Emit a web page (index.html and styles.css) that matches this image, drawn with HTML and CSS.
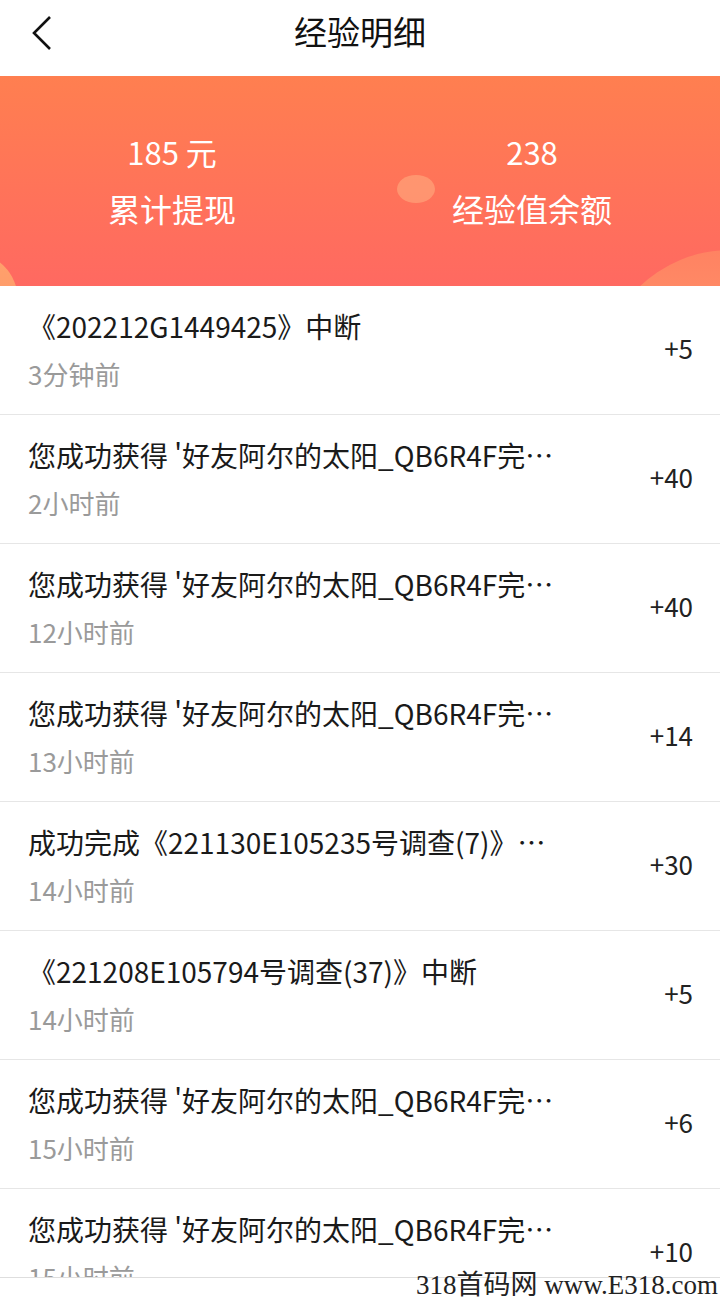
FILE: index.html
```html
<!DOCTYPE html>
<html lang="zh-CN">
<head>
  <meta charset="UTF-8">
  <meta name="viewport" content="width=device-width, initial-scale=1.0">
  <title>经验明细</title>
  <link rel="stylesheet" href="styles.css">
</head>
<body>
<div class="page">
  <header class="topbar">
    <a class="back" href="#">
      <svg width="24" height="40" viewBox="0 0 24 40">
        <polyline points="19,7 3,23 19,39" fill="none" stroke="#111" stroke-width="2.6"/>
      </svg>
    </a>
    <h1>经验明细</h1>
  </header>

  <section class="banner">
    <span class="dot"></span>
    <span class="bubble-left"></span>
    <span class="bubble-right"></span>
    <div class="stat">
      <div class="num">185 元</div>
      <div class="label">累计提现</div>
    </div>
    <div class="stat">
      <div class="num">238</div>
      <div class="label">经验值余额</div>
    </div>
  </section>

  <ul class="list">
    <li class="row">
      <div class="info">
        <div class="title">《202212G1449425》中断</div>
        <div class="time">3分钟前</div>
      </div>
      <div class="amount">+5</div>
    </li>
    <li class="row">
      <div class="info">
        <div class="title">您成功获得 '好友阿尔的太阳_QB6R4F完…</div>
        <div class="time">2小时前</div>
      </div>
      <div class="amount">+40</div>
    </li>
    <li class="row">
      <div class="info">
        <div class="title">您成功获得 '好友阿尔的太阳_QB6R4F完…</div>
        <div class="time">12小时前</div>
      </div>
      <div class="amount">+40</div>
    </li>
    <li class="row">
      <div class="info">
        <div class="title">您成功获得 '好友阿尔的太阳_QB6R4F完…</div>
        <div class="time">13小时前</div>
      </div>
      <div class="amount">+14</div>
    </li>
    <li class="row">
      <div class="info">
        <div class="title">成功完成《221130E105235号调查(7)》…</div>
        <div class="time">14小时前</div>
      </div>
      <div class="amount">+30</div>
    </li>
    <li class="row">
      <div class="info">
        <div class="title">《221208E105794号调查(37)》中断</div>
        <div class="time">14小时前</div>
      </div>
      <div class="amount">+5</div>
    </li>
    <li class="row">
      <div class="info">
        <div class="title">您成功获得 '好友阿尔的太阳_QB6R4F完…</div>
        <div class="time">15小时前</div>
      </div>
      <div class="amount">+6</div>
    </li>
    <li class="row">
      <div class="info">
        <div class="title">您成功获得 '好友阿尔的太阳_QB6R4F完…</div>
        <div class="time">15小时前</div>
      </div>
      <div class="amount">+10</div>
    </li>
  </ul>

  <div class="watermark">318首码网 www.E318.com</div>
</div>
</body>
</html>
```

FILE: styles.css
```css
* {
  box-sizing: border-box;
}
body {
  margin: 0;
  background: #fff;
  font-family: "Noto Sans CJK SC", "Noto Sans", sans-serif;
}
.page {
  position: relative;
  width: 720px;
  height: 1297px;
  overflow: hidden;
}
.topbar {
  height: 76px;
  display: flex;
  align-items: center;
  justify-content: center;
  position: relative;
  background: #fff;
}
.topbar h1 {
  margin: 0;
  font-size: 33px;
  font-weight: 400;
  color: #111;
  line-height: 1;
  margin-top: -14px;
}
.back {
  position: absolute;
  left: 31px;
  top: 10px;
}
.banner {
  position: relative;
  overflow: hidden;
  height: 210px;
  display: grid;
  grid-template-columns: 344px 1fr;
  align-items: center;
  background: linear-gradient(180deg, #ff7f50 0%, #ff6961 100%);
  color: #fff;
}
.stat {
  position: relative;
  text-align: center;
  margin-top: -3px;
}
.num {
  font-size: 31px;
  line-height: 40px;
}
.label {
  font-size: 32px;
  line-height: 40px;
  margin-top: 16px;
}
.dot {
  position: absolute;
  left: 397px;
  top: 99px;
  width: 38px;
  height: 28px;
  border-radius: 50%;
  background: rgba(255, 190, 140, 0.45);
}
.bubble-left {
  position: absolute;
  left: -78px;
  top: 176px;
  width: 96px;
  height: 96px;
  border-radius: 50%;
  background: linear-gradient(180deg, #ffa26c, #ff9468);
}
.bubble-right {
  position: absolute;
  left: 600px;
  top: 174px;
  width: 260px;
  height: 260px;
  border-radius: 50%;
  background: linear-gradient(180deg, #ff8863, #ff9a6a 30%);
  opacity: 0.8;
}
.list {
  list-style: none;
  margin: 0;
  padding: 0;
}
.row {
  height: 129px;
  padding: 0 27px 0 28px;
  display: flex;
  align-items: center;
  justify-content: space-between;
  border-bottom: 1px solid #e6e6e6;
}
.info {
  padding-bottom: 1px;
}
.title {
  font-size: 28px;
  line-height: 36px;
  color: #1a1a1a;
  white-space: nowrap;
}
.time {
  font-size: 26px;
  line-height: 36px;
  margin-top: 12px;
  color: #9a9a9a;
}
.amount {
  font-size: 26px;
  line-height: 36px;
  margin-bottom: 5px;
  color: #222;
}
.watermark {
  position: absolute;
  left: 0;
  right: 0;
  bottom: 0;
  height: 20px;
  background: #fff;
  border-top: 1px solid #dedede;
  text-align: right;
  padding-right: 2px;
  font-family: "Liberation Serif", "Noto Sans CJK SC", serif;
  font-size: 27px;
  line-height: 14px;
  color: #222;
}
```
